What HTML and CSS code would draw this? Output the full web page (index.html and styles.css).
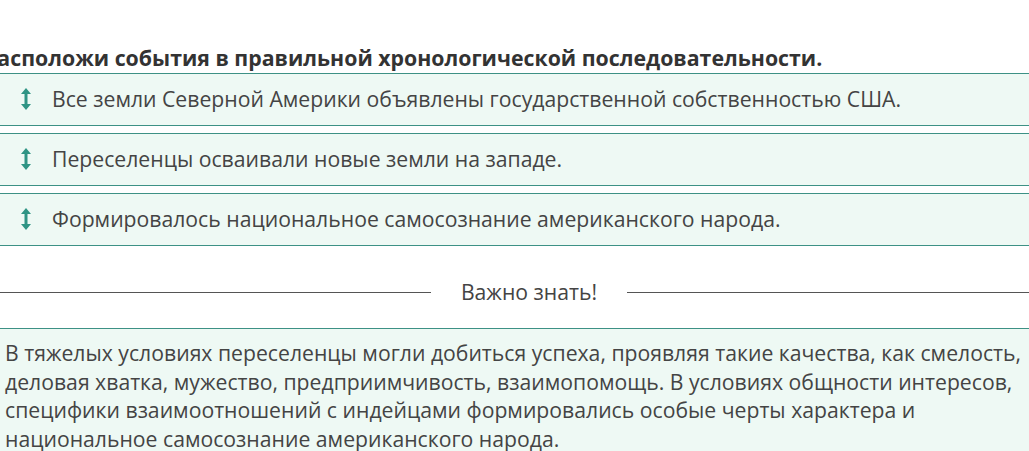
FILE: index.html
```html
<!DOCTYPE html>
<html>
<head>
  <title>Важно знать</title>
  <link rel="stylesheet" href="styles.css">
</head>
<body>
  <div class="task">
    <h1>Расположи события в правильной хронологической последовательности.</h1>

    <ul class="order-list">
      <li class="order-item">
        <svg class="drag-icon" width="10" height="22" viewBox="0 0 10 22">
          <path d="M5 0 L10 6 L6.5 6 L6.5 16 L10 16 L5 22 L0 16 L3.5 16 L3.5 6 L0 6 Z" />
        </svg>
        <span>Все земли Северной Америки объявлены государственной собственностью США.</span>
      </li>
      <li class="order-item">
        <svg class="drag-icon" width="10" height="22" viewBox="0 0 10 22">
          <path d="M5 0 L10 6 L6.5 6 L6.5 16 L10 16 L5 22 L0 16 L3.5 16 L3.5 6 L0 6 Z" />
        </svg>
        <span>Переселенцы осваивали новые земли на западе.</span>
      </li>
      <li class="order-item">
        <svg class="drag-icon" width="10" height="22" viewBox="0 0 10 22">
          <path d="M5 0 L10 6 L6.5 6 L6.5 16 L10 16 L5 22 L0 16 L3.5 16 L3.5 6 L0 6 Z" />
        </svg>
        <span>Формировалось национальное самосознание американского народа.</span>
      </li>
    </ul>

    <div class="divider">
      <span>Важно знать!</span>
    </div>

    <div class="note">
      <p>В тяжелых условиях переселенцы могли добиться успеха, проявляя такие качества, как смелость, деловая хватка, мужество, предприимчивость, взаимопомощь. В условиях общности интересов, специфики взаимоотношений с индейцами формировались особые черты характера и национальное самосознание американского народа.</p>
    </div>
  </div>
</body>
</html>
```

FILE: styles.css
```css
body {
  margin: 0;
  background-color: #ffffff;
  font-family: "Open Sans", "Noto Sans", sans-serif;
  color: #444444;
  overflow: hidden;
}

.task {
  width: 1090px;
  margin-left: -16px;
  padding-top: 44px;
}

h1 {
  margin: 0 0 1px 0;
  font-size: 21.3px;
  line-height: 28px;
  font-weight: 700;
  color: #333333;
}

.order-list {
  list-style: none;
  margin: 0;
  padding: 0;
  display: flex;
  flex-direction: column;
  gap: 7px;
}

.order-item {
  display: flex;
  align-items: center;
  gap: 21px;
  height: 51px;
  padding-left: 37px;
  padding-bottom: 2px;
  box-sizing: border-box;
  height: 53px;
  background-color: #eef9f4;
  border-top: 1px solid #3d9185;
  border-bottom: 1px solid #3d9185;
  font-size: 21.2px;
}

.drag-icon {
  fill: #2f9484;
  flex-shrink: 0;
}

.divider {
  display: flex;
  align-items: center;
  gap: 30px;
  margin-top: 32px;
  font-size: 21.2px;
  line-height: 28px;
}

.divider::before,
.divider::after {
  content: "";
  flex: 1;
  border-top: 1px solid #555555;
}

.note {
  margin-top: 22px;
  padding: 10px 39px 10px 21px;
  background-color: #eef9f4;
  border-top: 1px solid #3d9185;
}

.note p {
  margin: 0;
  font-size: 21.2px;
  line-height: 28.6px;
}
```
